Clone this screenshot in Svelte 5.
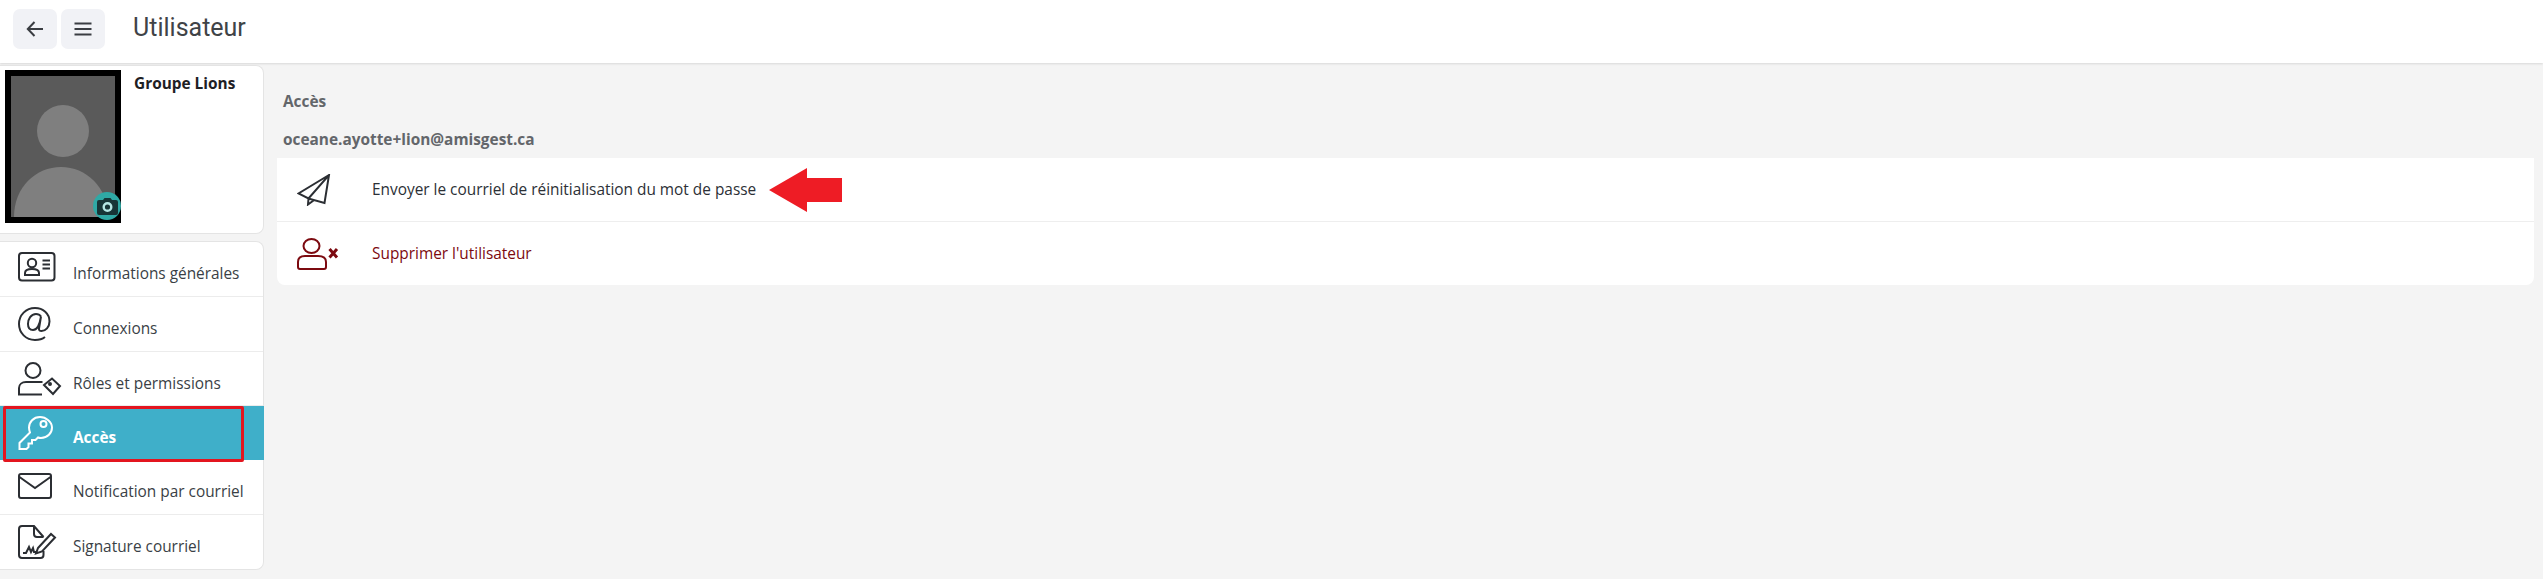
<script lang="ts">
  const menu = [
    { label: 'Informations générales', icon: 'card' },
    { label: 'Connexions', icon: 'at' },
    { label: 'Rôles et permissions', icon: 'role' },
    { label: 'Accès', icon: 'key', active: true },
    { label: 'Notification par courriel', icon: 'mail' },
    { label: 'Signature courriel', icon: 'sign' }
  ];
</script>

<div class="page">
  <header class="topbar">
    <button class="tool" aria-label="Retour">
      <svg width="20" height="20" viewBox="0 0 20 20"><path d="M18 10H3M9.500 3 2.800 10l6.700 7" /></svg>
    </button>
    <button class="tool" aria-label="Menu">
      <svg width="20" height="20" viewBox="0 0 20 20"><path d="M1.500 4.500h17M1.500 10h17M1.500 15.500h17" /></svg>
    </button>
    <h1>Utilisateur</h1>
  </header>

  <div class="body">
    <aside class="side">
      <section class="profile">
        <div class="photo">
          <svg viewBox="0 0 104 141" width="104" height="141">
            <rect width="104" height="141" fill="#5a5a5a" />
            <circle cx="52" cy="55" r="26" fill="#7f7f7f" />
            <path d="M3 141c0-30 22-50 47-50s47 20 47 50z" fill="#7f7f7f" />
          </svg>
          <span class="camera">
            <svg width="21" height="17" viewBox="0 0 21 17">
              <path d="M2 2h4l1.500-2h6L15 2h4a2 2 0 0 1 2 2v11a2 2 0 0 1-2 2H2a2 2 0 0 1-2-2V4a2 2 0 0 1 2-2z" fill="#173537" />
              <circle cx="10.500" cy="9" r="3.800" fill="none" stroke="#b5e6e3" stroke-width="2.400" />
            </svg>
          </span>
        </div>
        <strong>Groupe Lions</strong>
      </section>

      <nav class="menu">
        {#each menu as item}
          <a class="item" class:active={item.active} href="#top">
            <span class="icon">
              {#if item.icon === 'card'}
                <svg width="38" height="30" viewBox="0 0 38 30">
                  <rect x="1" y="1" width="35.500" height="27.500" rx="3" />
                  <circle cx="14" cy="11" r="4.200" />
                  <path d="M7 23v-2c0-3 3-4 7-4s7 1 7 4v2zM24.500 8.500h7.500M24.500 12.500h7.500M24.500 16.500h7.500" />
                </svg>
              {:else if item.icon === 'at'}
                <svg width="36" height="34" viewBox="0 0 36 34">
                  <path d="M23 9.500c-1-1.500-2.500-2.500-5-2.500-5 0-8 5-8 10 0 4 2 6 5 6 4 0 6.500-4 8-13.500l-2 12c-.300 2 1 2.500 2.500 2.500 4 0 8-4 8-9.500C31.500 6.500 25 1 17 1 8 1 1 8 1 17s7 16 16 16c4 0 7.500-1 10-3" />
                </svg>
              {:else if item.icon === 'role'}
                <svg width="44" height="34" viewBox="0 0 44 34">
                  <circle cx="15" cy="8.500" r="7.500" />
                  <path d="M24.500 20H8c-4 0-7 2.500-7 6v6.500h23" />
                  <path d="m26 23 8-6.500 8 7.500-7 8z" />
                  <circle cx="32" cy="22" r="1" />
                </svg>
              {:else if item.icon === 'key'}
                <svg width="36" height="34" viewBox="0 0 36 34">
                  <path d="M22 1C15.500 1 11 6 11 11.500c0 2 .500 3.500 1 5L1.500 27v6h7l2-2v-3.500h3.500V24h3.500l2.500-2.500c1 .500 2 .500 3 .500 6.500 0 11-5 11-10.500S28 1 22 1z" />
                  <circle cx="25.500" cy="8" r="3" />
                </svg>
              {:else if item.icon === 'mail'}
                <svg width="36" height="29" viewBox="0 0 36 29">
                  <rect x="1" y="4" width="32" height="24" rx="2" />
                  <path d="m1.500 7 15.500 11L32.500 7" />
                </svg>
              {:else}
                <svg width="40" height="34" viewBox="0 0 40 34">
                  <path d="M25.500 26v4a3 3 0 0 1-3 3H4a3 3 0 0 1-3-3V4a3 3 0 0 1 3-3h12l9.500 11" />
                  <path d="M16 1v8a3 3 0 0 0 3 3h6.500" />
                  <path d="m20 23 13-14 4 3.500-13 14-6 2z" />
                  <path d="M5 28h3l3-6 2 5 2-4 1 4h3" />
                </svg>
              {/if}
            </span>
            <span class="label">{item.label}</span>
            {#if item.active}
              <span class="mark"></span>
            {/if}
          </a>
        {/each}
      </nav>
    </aside>

    <main class="content">
      <h2>Accès</h2>
      <h3>oceane.ayotte+lion@amisgest.ca</h3>
      <div class="actions">
        <div class="action">
          <span class="action-icon">
            <svg width="34" height="32" viewBox="0 0 34 32">
              <path d="M32 1 1.500 19.500l10 5L32 1l-4.500 28-16-4.500-.500 6 5.500-4" />
            </svg>
          </span>
          <span>Envoyer le courriel de réinitialisation du mot de passe</span>
          <svg class="arrow" width="73" height="44" viewBox="0 0 73 44">
            <path d="M0 22 38 0v10h35v24H38v10z" />
          </svg>
        </div>
        <div class="action danger">
          <span class="action-icon">
            <svg width="42" height="32" viewBox="0 0 42 32">
              <ellipse cx="14.500" cy="8" rx="8" ry="7" />
              <path d="M8 18h13c5 0 8 2 8 6v5a2 2 0 0 1-2 2H3a2 2 0 0 1-2-2v-5c0-4 2-6 7-6z" />
              <path class="cross" d="m32.500 11 7.500 8.500M40 11l-7.500 8.500" />
            </svg>
          </span>
          <span>Supprimer l'utilisateur</span>
        </div>
      </div>
    </main>
  </div>
</div>

<style>
  :global(body) {
    margin: 0;
    background: #f4f4f4;
  }

  .page {
    height: 579px;
    overflow: hidden;
    font-family: "Open Sans", "Noto Sans", sans-serif;
    font-size: 15.4px;
    color: #2e3238;
  }

  .topbar {
    display: flex;
    align-items: flex-start;
    gap: 4px;
    height: 63px;
    padding: 9px 0 0 13px;
    box-sizing: border-box;
    background: #fff;
    box-shadow: 0 1px 2px #d8d8d8;
    margin-bottom: 2px;
  }

  .tool {
    display: flex;
    align-items: center;
    justify-content: center;
    width: 44px;
    height: 40px;
    padding: 0;
    border: 0;
    border-radius: 7px;
    background: #f1f2f6;
  }

  .tool svg {
    fill: none;
    stroke: #3a3d42;
    stroke-width: 2;
  }

  h1 {
    margin: 4px 0 0 24px;
    font-family: Roboto, sans-serif;
    font-size: 25px;
    line-height: 30px;
    font-weight: 400;
    color: #404347;
  }

  .body {
    display: flex;
  }

  .side {
    display: flex;
    flex-direction: column;
    gap: 7px;
    width: 264px;
    flex: none;
  }

  .profile {
    display: flex;
    gap: 13px;
    height: 169px;
    padding: 4px 0 0 5px;
    box-sizing: border-box;
    background: #fff;
    border: 1px solid #e4e4e4;
    border-left: 0;
    border-radius: 0 8px 8px 0;
  }

  .profile strong {
    margin-top: 4px;
    line-height: 20px;
    color: #1e2024;
  }

  .photo {
    position: relative;
    width: 104px;
    height: 141px;
    border: 6px solid #000;
    flex: none;
  }

  .photo > svg {
    display: block;
  }

  .camera {
    position: absolute;
    right: -6px;
    bottom: -3px;
    display: flex;
    align-items: center;
    justify-content: center;
    width: 28px;
    height: 28px;
    border-radius: 50%;
    background: #2fa9a5;
  }

  .menu {
    display: flex;
    flex-direction: column;
    height: 329px;
    box-sizing: border-box;
    background: #fff;
    border: 1px solid #e4e4e4;
    border-left: 0;
    border-radius: 0 8px 8px 0;
  }

  .item {
    position: relative;
    display: flex;
    align-items: flex-start;
    flex: 1;
    padding: 10px 0 0 18px;
    color: #3a3f46;
    text-decoration: none;
    border-bottom: 1px solid #ececec;
  }

  .item:last-child {
    border-bottom: 0;
  }

  .icon {
    display: block;
    width: 55px;
    flex: none;
    line-height: 0;
  }

  .icon svg {
    fill: none;
    stroke: #2b2e33;
    stroke-width: 2;
  }

  .label {
    margin-top: 11px;
    line-height: 21px;
    white-space: nowrap;
  }

  .active {
    background: #3fafc9;
    color: #fff;
    font-weight: 700;
    margin-right: -1px;
    border-bottom: 0;
  }

  .active .icon svg {
    stroke: #fff;
  }

  .mark {
    position: absolute;
    left: 3px;
    top: 0;
    width: 241px;
    height: 56px;
    box-sizing: border-box;
    border: 3px solid #e3151f;
    border-radius: 2px;
  }

  .content {
    flex: 1;
    padding: 0 9px 0 13px;
  }

  h2, h3 {
    margin: 0;
    padding-left: 6px;
    font-size: 15.4px;
    line-height: 20px;
    font-weight: 700;
    color: #63666a;
  }

  h2 {
    padding-top: 27px;
  }

  h3 {
    padding-top: 18px;
    padding-bottom: 8px;
  }

  .actions {
    background: #fff;
    border-radius: 0 0 8px 8px;
  }

  .action {
    position: relative;
    display: flex;
    align-items: center;
    height: 63px;
    color: #2c3036;
    border-bottom: 1px solid #eee;
  }

  .action:last-child {
    border-bottom: 0;
  }

  .action-icon {
    display: flex;
    width: 75px;
    padding-left: 20px;
    flex: none;
    line-height: 0;
  }

  .action-icon svg {
    fill: none;
    stroke: #2b2e33;
    stroke-width: 2;
  }

  .danger {
    color: #7c0a10;
  }

  .danger .action-icon svg {
    stroke: #7c0a10;
  }

  .cross {
    stroke-width: 3;
  }

  .arrow {
    position: absolute;
    left: 492px;
    top: 10px;
    fill: #ee1c25;
  }
</style>
